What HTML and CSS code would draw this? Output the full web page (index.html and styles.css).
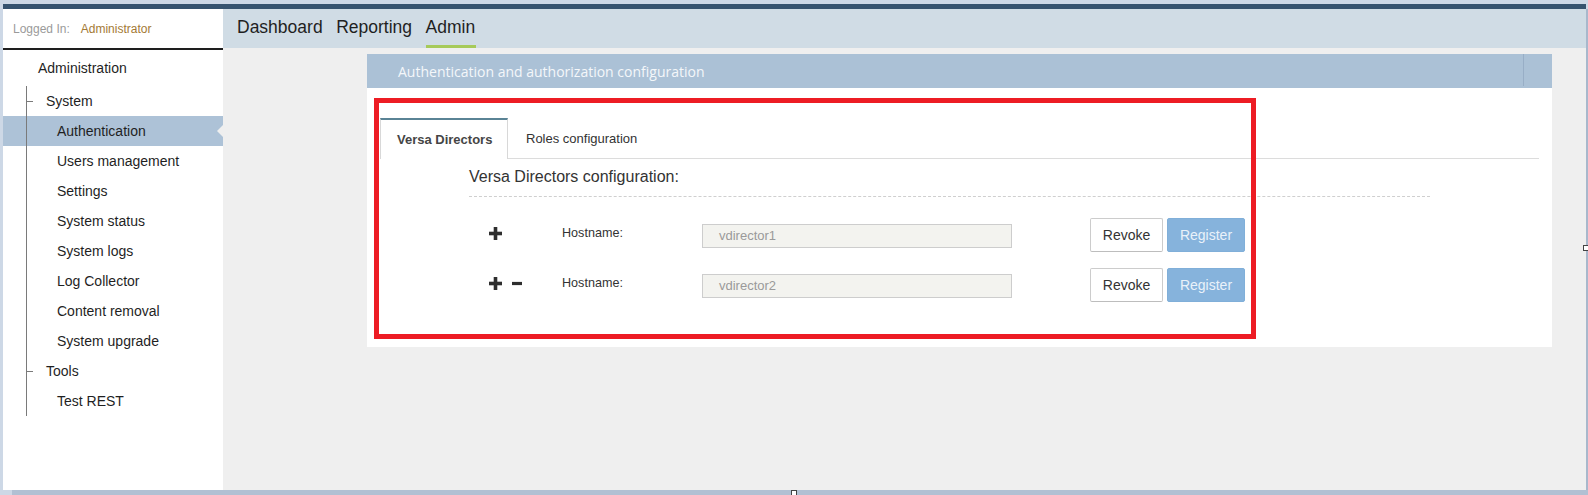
FILE: index.html
```html
<!DOCTYPE html>
<html>
<head>
<meta charset="utf-8">
<link rel="stylesheet" href="styles.css">
</head>
<body>
<div class="darkbar"></div>
<div class="frame">
  <aside class="sidebar">
    <div class="login"><span class="login-lbl">Logged In:</span><span class="login-user">Administrator</span></div>
    <div class="tree">
      <div class="root">Administration</div>
      <div class="branch">
        <div class="row grp"><span class="tick"></span>System</div>
        <div class="row sub selected">Authentication</div>
        <div class="row sub">Users management</div>
        <div class="row sub">Settings</div>
        <div class="row sub">System status</div>
        <div class="row sub">System logs</div>
        <div class="row sub">Log Collector</div>
        <div class="row sub">Content removal</div>
        <div class="row sub">System upgrade</div>
        <div class="row grp"><span class="tick"></span>Tools</div>
        <div class="row sub">Test REST</div>
      </div>
    </div>
  </aside>
  <main class="main">
    <nav class="nav">
      <span class="nav-item">Dashboard</span>
      <span class="nav-item">Reporting</span>
      <span class="nav-item active">Admin</span>
    </nav>
    <div class="content">
      <section class="panel">
        <header class="panel-hdr">
          <span class="panel-title">Authentication and authorization configuration</span>
          <span class="hdr-end"></span>
        </header>
        <div class="panel-body">
          <div class="tabs">
            <div class="tab active">Versa Directors</div>
            <div class="tab">Roles configuration</div>
          </div>
          <div class="section">
            <div class="sec-title">Versa Directors configuration:</div>
          </div>
          <div class="rows">
            <div class="hrow">
              <div class="icons">
                <svg class="ico-plus" width="13" height="13" viewBox="0 0 13 13"><rect x="0" y="4.7" width="13" height="3.6" fill="#2e2e2e"/><rect x="4.7" y="0" width="3.6" height="13" fill="#2e2e2e"/></svg>
              </div>
              <div class="hlabel">Hostname:</div>
              <div class="hinput">vdirector1</div>
              <button class="btn btn-revoke">Revoke</button>
              <button class="btn btn-register">Register</button>
            </div>
            <div class="hrow">
              <div class="icons">
                <svg class="ico-plus" width="13" height="13" viewBox="0 0 13 13"><rect x="0" y="4.7" width="13" height="3.6" fill="#2e2e2e"/><rect x="4.7" y="0" width="3.6" height="13" fill="#2e2e2e"/></svg>
                <svg class="ico-minus" width="10" height="13" viewBox="0 0 10 13"><rect x="0" y="4.9" width="10" height="3.2" fill="#2e2e2e"/></svg>
              </div>
              <div class="hlabel">Hostname:</div>
              <div class="hinput">vdirector2</div>
              <button class="btn btn-revoke">Revoke</button>
              <button class="btn btn-register">Register</button>
            </div>
          </div>
          <div class="annot"></div>
        </div>
      </section>
    </div>
    <span class="handle handle-right"></span>
    <span class="handle handle-bottom"></span>
  </main>
</div>
<div class="bottombar"></div>
</body>
</html>
```

FILE: styles.css
```css
html, body {
  margin: 0;
  padding: 0;
}
body {
  width: 1588px;
  height: 495px;
  overflow: hidden;
  background: #cdd8e6;
  font-family: "Liberation Sans", Arial, sans-serif;
  padding-top: 4px;
  box-sizing: border-box;
}
.darkbar {
  margin-left: 3px;
  width: 1583px;
  height: 5px;
  background: #36536f;
}
.frame {
  display: flex;
  margin-left: 3px;
  width: 1585px;
  height: 481px;
  box-sizing: border-box;
  border-right: 2px solid #a8b8cc;
}
.bottombar {
  margin-left: 12px;
  height: 5px;
  background: #b1c0d3;
}

/* sidebar */
.sidebar {
  width: 220px;
  flex: none;
  background: #fff;
  display: flex;
  flex-direction: column;
}
.login {
  height: 39px;
  border-bottom: 2px solid #1e1e1e;
  display: flex;
  align-items: center;
  padding-left: 10px;
  font-size: 12px;
  box-sizing: content-box;
}
.login-lbl {
  color: #9a9a9a;
  margin-right: 11px;
}
.login-user {
  color: #a37a35;
}
.tree {
  font-size: 14px;
  color: #1f1f1f;
}
.root {
  height: 36px;
  display: flex;
  align-items: center;
  padding-left: 35px;
}
.row {
  height: 30px;
  display: flex;
  align-items: center;
  background: linear-gradient(#7a7a7a, #7a7a7a) 23px 0 / 1px 100% no-repeat;
  position: relative;
}
.grp {
  padding-left: 24px;
}
.tick {
  width: 6px;
  height: 1px;
  background: #7a7a7a;
  margin-right: 13px;
}
.sub {
  padding-left: 54px;
}
.row.selected {
  background: linear-gradient(#7a7a7a, #7a7a7a) 23px 0 / 1px 100% no-repeat, #adc2d7;
}
.row.selected::after {
  content: "";
  position: absolute;
  right: 0;
  top: 9px;
  border-right: 6px solid #efefef;
  border-top: 6px solid transparent;
  border-bottom: 6px solid transparent;
}

/* main */
.main {
  flex: 1;
  background: #efefef;
  display: flex;
  flex-direction: column;
  position: relative;
}
.nav {
  height: 39px;
  background: #d0dce5;
  display: flex;
  align-items: stretch;
  padding-left: 14px;
  gap: 13.5px;
}
.nav-item {
  font-size: 17.5px;
  color: #1f1f1f;
  display: flex;
  align-items: center;
  border-bottom: 3px solid transparent;
  padding-top: 1px;
}
.nav-item.active {
  border-bottom-color: #a6ca5a;
  padding-right: 1px;
}
.content {
  padding: 6px 34px 0 144px;
}
.panel {
  width: 1185px;
}
.panel-hdr {
  height: 34px;
  background: #abc1d6;
  display: flex;
  align-items: center;
  justify-content: space-between;
  padding-left: 31px;
}
.panel-title {
  font-family: "Open Sans", "Noto Sans", sans-serif;
  font-size: 14px;
  color: #f4f7fa;
}
.hdr-end {
  width: 29px;
  height: 32px;
  align-self: flex-start;
  border-left: 1px solid #98aec6;
  box-sizing: border-box;
}
.panel-body {
  position: relative;
  background: #fff;
  height: 259px;
  box-sizing: border-box;
  padding: 30px 13px 0 13px;
}
.tabs {
  display: flex;
  border-bottom: 1px solid #dcdcdc;
  height: 40px;
}
.tab {
  font-size: 13px;
  color: #333;
  display: flex;
  align-items: center;
  padding: 0 18px;
  height: 40px;
  box-sizing: border-box;
}
.tab.active {
  width: 128px;
  padding: 0 0 0 16px;
  font-weight: bold;
  color: #454545;
  background: #fff;
  border-top: 2px solid #5a8395;
  border-left: 1px solid #d8d8d8;
  border-right: 1px solid #d8d8d8;
  height: 41px;
  margin-bottom: -1px;
}
.section {
  margin-left: 89px;
  width: 961px;
  padding-top: 8px;
  padding-bottom: 9px;
  border-bottom: 1px dashed #cfcfcf;
}
.sec-title {
  font-size: 16px;
  color: #333;
  line-height: 20px;
}
.rows {
  padding-top: 21px;
  display: flex;
  flex-direction: column;
  gap: 16px;
}
.hrow {
  display: flex;
  align-items: flex-start;
  height: 34px;
  padding-left: 109px;
}
.icons {
  width: 73px;
  height: 30px;
  display: flex;
  align-items: center;
  gap: 10px;
}
.hlabel {
  width: 140px;
  height: 30px;
  line-height: 30px;
  font-size: 12.6px;
  color: #333;
}
.hinput {
  width: 310px;
  height: 24px;
  margin-top: 6px;
  box-sizing: border-box;
  border: 1px solid #cdcdcd;
  background: #f3f3ef;
  color: #9a9a9a;
  font-size: 13px;
  line-height: 22px;
  padding-left: 16px;
}
.btn {
  height: 34px;
  font-family: "Liberation Sans", Arial, sans-serif;
  font-size: 14px;
  border-radius: 2px;
  padding: 0;
  margin: 0;
}
.btn-revoke {
  width: 73px;
  margin-left: 78px;
  background: #fff;
  border: 1px solid #cccccc;
  border-bottom-color: #bdbdbd;
  color: #333;
}
.btn-register {
  width: 78px;
  margin-left: 4px;
  background: #86b3dc;
  border: 1px solid #80afd9;
  color: #eaf2fa;
}
.annot {
  position: absolute;
  left: 7px;
  top: 10px;
  width: 882px;
  height: 241px;
  box-sizing: border-box;
  border: 5px solid #ed1c24;
  pointer-events: none;
}
.handle {
  position: absolute;
  width: 4px;
  height: 4px;
  background: #fff;
  border: 1px solid #444;
}
.handle-right {
  right: -3px;
  top: 236px;
}
.handle-bottom {
  left: 568px;
  bottom: -6px;
}
```
